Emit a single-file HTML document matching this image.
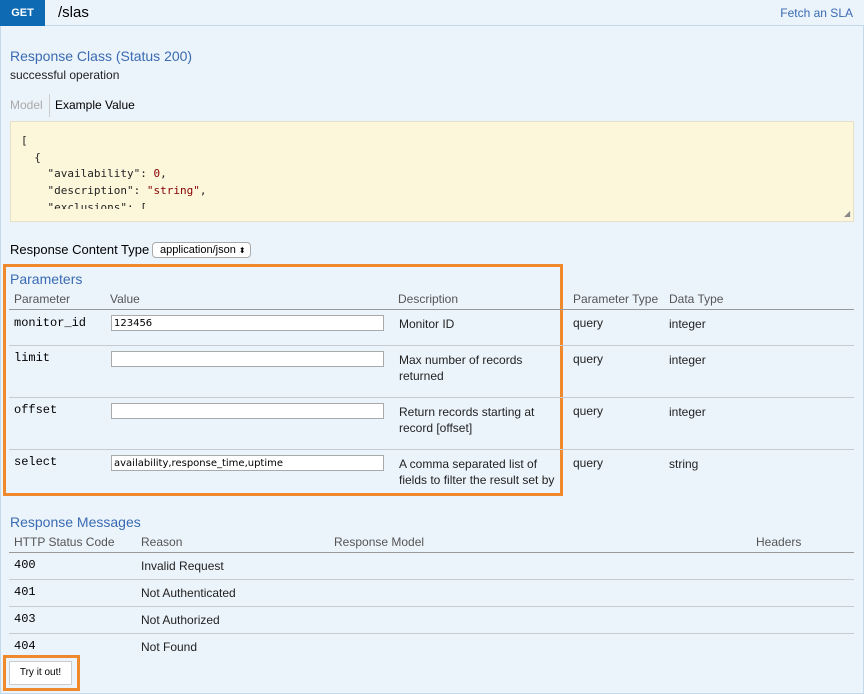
<!DOCTYPE html>
<html><head><meta charset="utf-8"><style>
*{margin:0;padding:0;box-sizing:border-box}
body{width:864px;height:694px;background:#fff;font-family:"Liberation Sans",Arial,sans-serif;position:relative;overflow:hidden;color:#222}
.a{position:absolute;white-space:nowrap}
.panel{position:absolute;left:0;top:0;width:864px;height:694px;background:#ebf3fb;border:1px solid #c3d9ec;border-top:none}
.h{font-size:14px;color:#3a6bb2}
.t{font-size:12px}
.g{font-size:12px;color:#555}
.m{font-family:"Liberation Mono","DejaVu Sans Mono",monospace;font-size:12px;color:#000}
.line{position:absolute;height:1px;background:#c8ccd0}
.inp{position:absolute;left:111px;width:273px;height:16px;background:#fff;border:1px solid #aaa;font-family:"DejaVu Sans",sans-serif;font-size:10px;padding-left:2px;display:flex;align-items:center;color:#000}
.code{font-family:"DejaVu Sans Mono",monospace;font-size:11px;color:#222}
</style></head><body>
<div class="panel"></div>
<div class="a" style="left:0;top:0;width:864px;height:26px;border-bottom:1px solid #c3d9ec;background:#ebf3fb"></div>
<div class="a" style="left:0;top:0;width:45px;height:26px;background:#0f6ab4;color:#fff;font-size:11px;font-weight:bold;text-align:center;line-height:27px">GET</div>
<div class="a" style="left:58px;top:4px;font-size:15px;color:#000">/slas</div>
<div class="a" style="right:11px;top:6px;font-size:12px;color:#3a6bb2">Fetch an SLA</div>

<div class="a h" style="left:10px;top:48px">Response Class (Status 200)</div>
<div class="a t" style="left:10px;top:68px">successful operation</div>
<div class="a t" style="left:10px;top:98px;color:#aaa">Model</div>
<div class="a" style="left:49px;top:94px;width:1px;height:23px;background:#ccc"></div>
<div class="a t" style="left:55px;top:98px;color:#000">Example Value</div>

<div class="a" style="left:10px;top:121px;width:844px;height:101px;background:#fcf6db;border:1px solid #e5e0c6;overflow:hidden">
<div class="a code" style="left:10px;top:11px;line-height:16.7px;white-space:pre">[
  {
    "availability": <span style="color:#800">0</span>,
    "description": <span style="color:#800">"string"</span>,
    "exclusions": [
      {</div>
<div class="a" style="left:0;top:87px;width:844px;height:14px;background:#fcf6db"></div>
<div class="a" style="left:833px;top:87px;font-size:8px;color:#888">◢</div>
</div>

<div class="a t" style="left:10px;top:242px;font-size:13px;color:#000">Response Content Type</div>
<div class="a" style="left:152px;top:242px;width:99px;height:16px;border:1px solid #aaa;border-radius:4px;background:#fff;font-size:11px;line-height:14px;padding-left:7px;color:#000">application/json <span style="font-size:8px">⬍</span></div>

<div class="a" style="left:3px;top:264px;width:560px;height:232px;border:3px solid #f0892b"></div>
<div class="a h" style="left:10px;top:271px">Parameters</div>
<div class="a g" style="left:14px;top:292px">Parameter</div>
<div class="a g" style="left:110px;top:292px">Value</div>
<div class="a g" style="left:398px;top:292px">Description</div>
<div class="a g" style="left:573px;top:292px">Parameter Type</div>
<div class="a g" style="left:669px;top:292px">Data Type</div>
<div class="line" style="left:9px;top:309px;width:845px;background:#999"></div>

<div class="a m" style="left:14px;top:316px">monitor_id</div>
<div class="inp" style="top:315px">123456</div>
<div class="a t" style="left:399px;top:317px">Monitor ID</div>
<div class="a t" style="left:573px;top:316px">query</div>
<div class="a t" style="left:669px;top:317px">integer</div>
<div class="line" style="left:9px;top:345px;width:845px"></div>

<div class="a m" style="left:14px;top:351px">limit</div>
<div class="inp" style="top:351px"></div>
<div class="a t" style="left:399px;top:352px;line-height:16px">Max number of records<br>returned</div>
<div class="a t" style="left:573px;top:352px">query</div>
<div class="a t" style="left:669px;top:353px">integer</div>
<div class="line" style="left:9px;top:397px;width:845px"></div>

<div class="a m" style="left:14px;top:403px">offset</div>
<div class="inp" style="top:403px"></div>
<div class="a t" style="left:399px;top:404px;line-height:16px">Return records starting at<br>record [offset]</div>
<div class="a t" style="left:573px;top:404px">query</div>
<div class="a t" style="left:669px;top:405px">integer</div>
<div class="line" style="left:9px;top:449px;width:845px"></div>

<div class="a m" style="left:14px;top:455px">select</div>
<div class="inp" style="top:455px">availability,response_time,uptime</div>
<div class="a t" style="left:399px;top:456px;line-height:16px">A comma separated list of<br>fields to filter the result set by</div>
<div class="a t" style="left:573px;top:456px">query</div>
<div class="a t" style="left:669px;top:457px">string</div>

<div class="a h" style="left:10px;top:514px">Response Messages</div>
<div class="a g" style="left:14px;top:535px">HTTP Status Code</div>
<div class="a g" style="left:141px;top:535px">Reason</div>
<div class="a g" style="left:334px;top:535px">Response Model</div>
<div class="a g" style="left:756px;top:535px">Headers</div>
<div class="line" style="left:9px;top:552px;width:845px;background:#999"></div>
<div class="a m" style="left:14px;top:558px">400</div><div class="a t" style="left:141px;top:559px">Invalid Request</div>
<div class="line" style="left:9px;top:579px;width:845px"></div>
<div class="a m" style="left:14px;top:585px">401</div><div class="a t" style="left:141px;top:586px">Not Authenticated</div>
<div class="line" style="left:9px;top:606px;width:845px"></div>
<div class="a m" style="left:14px;top:612px">403</div><div class="a t" style="left:141px;top:613px">Not Authorized</div>
<div class="line" style="left:9px;top:633px;width:845px"></div>
<div class="a m" style="left:14px;top:639px">404</div><div class="a t" style="left:141px;top:640px">Not Found</div>

<div class="a" style="left:3px;top:655px;width:77px;height:36px;border:3px solid #f0892b"></div>
<div class="a" style="left:9px;top:661px;width:63px;height:24px;background:#fff;border:1px solid #ccc;font-size:10px;line-height:22px;text-align:center;color:#000">Try it out!</div>
</body></html>
